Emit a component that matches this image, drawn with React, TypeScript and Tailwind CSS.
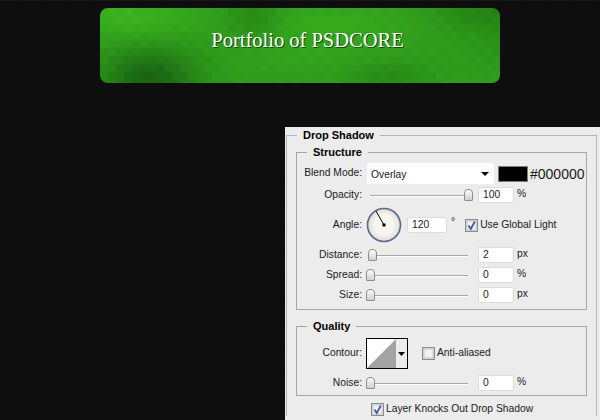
const uiFont = "font-['Liberation_Sans',sans-serif] text-[10.3px] leading-none text-[#1a1a1a]";

// dark and light patches of the banner's blurred texture: x, y, radius x, radius y, strength
const patches = [
  [150, 80, 46, 30, -0.8],
  [255, 18, 30, 20, -0.35],
  [390, 76, 40, 14, -0.25],
  [490, 12, 60, 22, -0.35],
  [130, 16, 60, 22, 0.4],
  [330, 24, 90, 22, 0.25],
  [300, 60, 70, 14, 0.1],
  [520, 50, 40, 20, -0.15],
];

function cellColor(x: number, y: number) {
  let v = 0;
  for (const [px, py, rx, ry, s] of patches) {
    v += s * Math.exp(-((x - px) ** 2) / (rx * rx) - ((y - py) ** 2) / (ry * ry));
  }
  v += Math.sin(x * 12.9 + y * 78.2) * 0.04;
  const mix = (base: number, dark: number, light: number) =>
    Math.round(v < 0 ? base + (base - dark) * v : base + (light - base) * v * 1.6);
  return `rgb(${mix(47, 20, 64)},${mix(156, 85, 190)},${mix(27, 14, 34)})`;
}

function BannerTexture() {
  const cells = [];
  // one extra ring of cells so the blur never reaches the banner's edge
  for (let row = -2; row < 12; row++) {
    for (let col = -2; col < 52; col++) {
      const x = 100 + col * 8 + 4;
      const y = 8 + row * 8 + 4;
      cells.push(<rect key={`${row}-${col}`} x={col * 8} y={row * 8} width="8.5" height="8.5" fill={cellColor(x, y)} />);
    }
  }
  return (
    <svg width="400" height="75" viewBox="0 0 400 75" className="absolute inset-0">
      <defs>
        <filter id="soft" filterUnits="userSpaceOnUse" x="-16" y="-16" width="432" height="112">
          <feGaussianBlur stdDeviation="1.5" />
        </filter>
      </defs>
      <g filter="url(#soft)">{cells}</g>
    </svg>
  );
}

function Legend({ children, className }: { children: string; className: string }) {
  return <legend className={`font-bold text-[11px] leading-[16px] text-black ${className}`}>{children}</legend>;
}

function Label({ children }: { children: string }) {
  return <span className="w-[65px] shrink-0 whitespace-nowrap text-right">{children}:</span>;
}

function NumberBox({ value, className = "w-[36px]" }: { value: string; className?: string }) {
  return (
    <span className={`flex h-[16px] items-center rounded-[2px] bg-white pl-[5px] pt-[1px] shadow-[inset_0_0_0_1px_#dcdcdc] ${className}`}>
      {value}
    </span>
  );
}

function Slider({ thumb }: { thumb: number }) {
  return (
    <div className="relative h-[16px] w-[111px] shrink-0">
      <div className="absolute left-[3px] top-[8px] h-[2px] w-[98px] border-t border-[#a9a9a9] bg-white" />
      <div
        className="absolute top-[2px] h-[12px] w-[9px] rounded-t-[4px] rounded-b-[1px] border border-[#8d8d8d] bg-gradient-to-b from-white to-[#cfcfcf]"
        style={{ left: thumb }}
      />
    </div>
  );
}

function Check({ checked }: { checked?: boolean }) {
  return (
    <svg width="13" height="13" viewBox="0 0 13 13" className="shrink-0">
      <rect x="0.5" y="0.5" width="12" height="12" fill="#dcdcdc" stroke="#8a8a8a" />
      <rect x="2" y="2" width="9" height="9" fill="#f1f1f1" stroke="#c8c8c8" strokeWidth="1" />
      {checked && <path d="M3.5 6.5 L5.8 10 L9.8 2.5" fill="none" stroke="#3f5fa8" strokeWidth="1.8" />}
    </svg>
  );
}

function SliderRow({ label, value, unit, thumb, className }: { label: string; value: string; unit: string; thumb: number; className: string }) {
  return (
    <div className={`flex h-[16px] items-center ${className}`}>
      <Label>{label}</Label>
      <span className="ml-[5px]">
        <Slider thumb={thumb} />
      </span>
      <NumberBox value={value} />
      <span className="ml-[3px] -mt-[1px]">{unit}</span>
    </div>
  );
}

export default function App() {
  return (
    <div className="flex h-[420px] w-[600px] flex-col overflow-hidden border-t border-[#161616] bg-[#0d0d0d] bg-[linear-gradient(#0f0f0f_1px,transparent_1px),linear-gradient(90deg,#0f0f0f_1px,transparent_1px)] bg-[size:3px_3px]">
      <div className="relative ml-[100px] mt-[7px] flex h-[75px] w-[400px] items-center justify-center overflow-hidden rounded-[8px] pb-[10px] pl-[15px]">
        <BannerTexture />
        <h1 className="relative font-['Liberation_Serif',serif] text-[20.5px] leading-none text-white [text-shadow:1px_1px_0_#164d0c]">
          Portfolio of PSDCORE
        </h1>
      </div>

      <div className={`ml-[285px] mt-[44px] flex-1 bg-[#ececec] pl-[1px] pr-[3px] ${uiFont}`}>
        <fieldset className="mr-0 min-w-0 border border-b-0 border-[#b4b4b4] px-[9px]">
          <Legend className="ml-[1px] px-[6px]">Drop Shadow</Legend>

          <fieldset className="mt-[1px] min-w-0 border border-[#a6a6a6] pb-[6px]">
            <Legend className="ml-[10px] px-[6px]">Structure</Legend>
            <div className="mt-[3px] flex h-[21px] items-center">
              <Label>Blend Mode</Label>
              <div className="ml-[5px] flex h-[21px] w-[127px] items-center justify-between rounded-[2px] bg-white pl-[4px] pr-[5px]">
                <span className="pt-[3px]">Overlay</span>
                <svg width="8" height="4" viewBox="0 0 8 4"><path d="M0 0h8L4 4z" fill="#000" /></svg>
              </div>
              <div className="ml-[4px] h-[16px] w-[30px] border border-[#7d7d7d] bg-black" />
              <span className="ml-[2px] font-['Liberation_Sans',sans-serif] text-[14px]">#000000</span>
            </div>
            <div className="mt-[3px]">
              <SliderRow label="Opacity" value="100" unit="%" thumb={97} className="" />
            </div>

            <div className="mt-[4px] flex h-[36px] items-center">
              <Label>Angle</Label>
              <svg width="36" height="36" viewBox="0 0 36 36" className="ml-[4px] shrink-0">
                <defs>
                  <radialGradient id="dial">
                    <stop offset="0.6" stopColor="#f6f5f0" />
                    <stop offset="1" stopColor="#dedbd2" />
                  </radialGradient>
                </defs>
                <circle cx="18" cy="18" r="16.5" fill="url(#dial)" stroke="#54698f" strokeWidth="1.6" />
                <line x1="18" y1="18" x2="10" y2="4" stroke="#000" />
                <rect x="16.5" y="16.5" width="3" height="3" fill="#000" />
              </svg>
              <span className="ml-[5px]">
                <NumberBox value="120" className="w-[40px]" />
              </span>
              <span className="ml-[4px] mr-[10px] -mt-[5px]">°</span>
              <Check checked />
              <span className="ml-[2px]">Use Global Light</span>
            </div>

            <SliderRow label="Distance" value="2" unit="px" thumb={1} className="mt-[4px]" />
            <SliderRow label="Spread" value="0" unit="%" thumb={-1} className="mt-[4px]" />
            <SliderRow label="Size" value="0" unit="px" thumb={-1} className="mt-[4px]" />
          </fieldset>

          <fieldset className="mt-[8px] min-w-0 border border-[#a6a6a6] pb-[4px]">
            <Legend className="ml-[10px] px-[6px]">Quality</Legend>
            <div className="mt-[4px] flex h-[31px] items-center">
              <Label>Contour</Label>
              <div className="ml-[4px] flex h-[31px] w-[42px] border border-black bg-[#ececec]">
                <svg width="29" height="29" viewBox="0 0 29 29" className="bg-white">
                  <path d="M0 29 L29 0 V29 Z" fill="#a3a3a3" />
                </svg>
                <div className="flex flex-1 items-center justify-center">
                  <svg width="7" height="4" viewBox="0 0 7 4"><path d="M0 0h7L3.5 4z" fill="#000" /></svg>
                </div>
              </div>
              <span className="ml-[14px]"><Check /></span>
              <span className="ml-[2px]">Anti-aliased</span>
            </div>
            <SliderRow label="Noise" value="0" unit="%" thumb={-1} className="mt-[6px]" />
          </fieldset>

          <div className="mt-[7px] flex items-center pl-[75px]">
            <Check checked />
            <span className="ml-[2px]">Layer Knocks Out Drop Shadow</span>
          </div>
        </fieldset>
      </div>
    </div>
  );
}
